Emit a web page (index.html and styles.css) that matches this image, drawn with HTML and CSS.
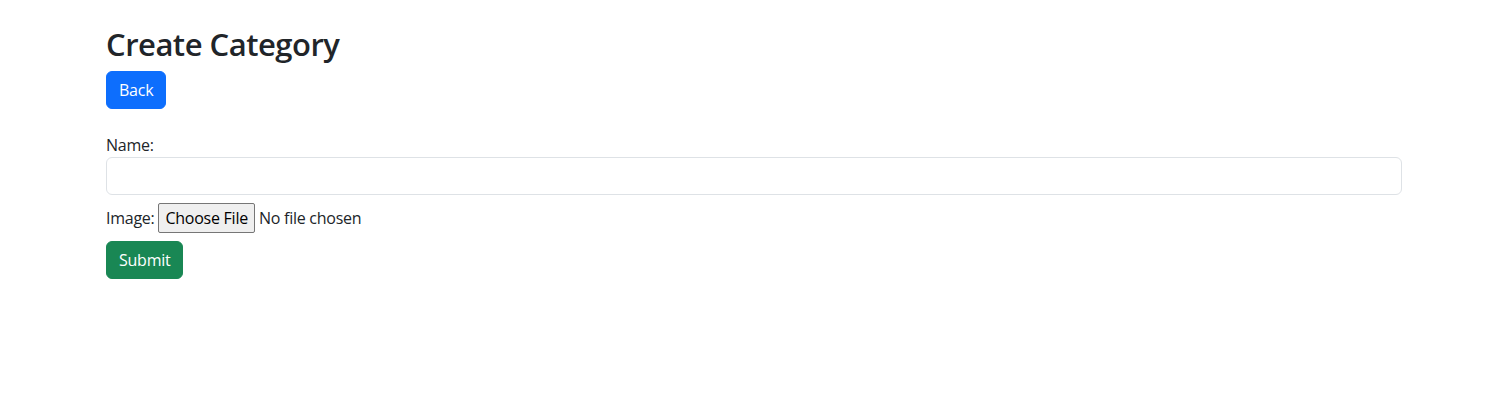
FILE: index.html
```html
<!DOCTYPE html>
<html lang="en">
<head>
<meta charset="utf-8">
<title>Create Category</title>
<link rel="stylesheet" href="styles.css">
</head>
<body>
<div class="container">
  <h2 class="title">Create Category</h2>
  <a class="btn btn-primary" href="#">Back</a>
  <form class="form">
    <div class="field">
      <label for="name">Name:</label>
      <input class="form-control" type="text" id="name">
    </div>
    <div class="field">
      <label for="image">Image:</label>
      <input class="file" type="file" id="image">
    </div>
    <button class="btn btn-success" type="submit">Submit</button>
  </form>
</div>
</body>
</html>
```
FILE: styles.css
```css
* { box-sizing: border-box; }
body {
  margin: 0;
  font-family: "Open Sans", "Noto Sans", sans-serif;
  font-size: 16px;
  line-height: 1.5;
  letter-spacing: -0.25px;
  color: #212529;
  background: #fff;
}
.container {
  width: 1296px;
  margin: 25px 0 0 106px;
}
.title {
  margin: 0 0 8px;
  font-size: 31px;
  font-weight: 600;
  line-height: 38px;
  letter-spacing: -0.5px;
}
.btn {
  display: inline-block;
  padding: 6px 12px;
  font-family: inherit;
  font-size: 16px;
  line-height: 1.5;
  letter-spacing: inherit;
  color: #fff;
  text-decoration: none;
  border: 1px solid transparent;
  border-radius: 6px;
  cursor: pointer;
}
.btn-primary { background: #0d6efd; border-color: #0d6efd; }
.btn-success { background: #198754; border-color: #198754; }
.form { margin-top: 24px; }
.field { margin-bottom: 8px; }
label { display: inline-block; }
.form-control {
  display: block;
  width: 100%;
  height: 38px;
  padding: 6px 12px;
  font: inherit;
  border: 1px solid #dee2e6;
  border-radius: 6px;
  background: #fff;
}
.file {
  font: inherit;
  line-height: 1.5;
  letter-spacing: inherit;
  color: #212529;
}
.file::file-selector-button {
  font: inherit;
  line-height: 1.5;
  letter-spacing: inherit;
  padding: 2px 6px;
  margin-right: 4px;
  background: #efefef;
  border: 1px solid #767676;
  border-radius: 2px;
  color: #000;
}
```
